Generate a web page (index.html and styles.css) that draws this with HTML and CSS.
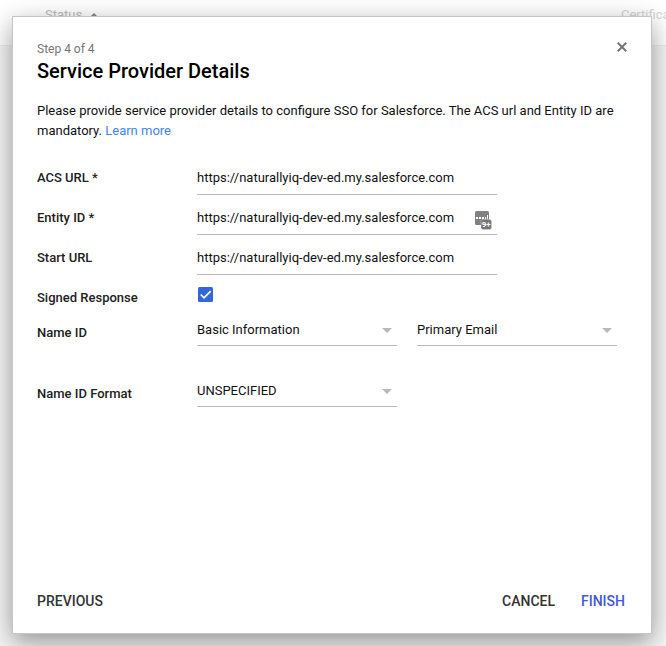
FILE: index.html
```html
<!DOCTYPE html>
<html lang="en">
<head>
<meta charset="utf-8">
<title>Service Provider Details</title>
<link rel="stylesheet" href="styles.css">
</head>
<body>
<div class="backdrop">
  <div class="columns">
    <span class="status">Status <svg class="sort" viewBox="0 0 6 4"><path d="M3 0l3 3v1H0V3z"/></svg></span>
    <span class="certificate">Certificate</span>
  </div>
</div>
<main class="dialog">
  <header class="head">
    <div>
      <div class="step">Step 4 of 4</div>
      <h1>Service Provider Details</h1>
    </div>
    <svg class="close" viewBox="0 0 10 10"><path d="M.7.7l8.6 8.6M9.3.7L.7 9.3"/></svg>
  </header>
  <p class="intro"><span>Please provide service provider details to configure SSO for Salesforce. The ACS url and Entity ID are</span><br><span>mandatory.</span> <a>Learn more</a></p>
  <section class="form">
    <div class="row"><label>ACS URL *</label><div class="field">https://naturallyiq-dev-ed.my.salesforce.com</div></div>
    <div class="row"><label>Entity ID *</label><div class="field">https://naturallyiq-dev-ed.my.salesforce.com
      <svg class="manager" viewBox="0 0 17 19"><rect width="14" height="14" rx="1.5"/><path class="dots" d="M1 6h2v2H1zM4 6h2v2H4zM7 6h2v2H7zM10 6h1v2h-1zM12 4h1v4h-1z"/><rect class="badge" x="6" y="8.5" width="10.5" height="10" rx="2"/><text x="6.7" y="16.3">9+</text></svg></div></div>
    <div class="row"><label>Start URL</label><div class="field">https://naturallyiq-dev-ed.my.salesforce.com</div></div>
    <div class="row check-row"><label>Signed Response</label><svg class="check" viewBox="0 0 15 15"><rect width="15" height="15" rx="1.5"/><path d="M2.7 7.5l3.3 3.3 6.7-6.7"/></svg></div>
    <div class="row select-row"><label>Name ID</label><div class="select">Basic Information<svg viewBox="0 0 10 5"><path d="M0 0h10L5 5z"/></svg></div><div class="select">Primary Email<svg viewBox="0 0 10 5"><path d="M0 0h10L5 5z"/></svg></div></div>
    <div class="row select-row format"><label>Name ID Format</label><div class="select">UNSPECIFIED<svg viewBox="0 0 10 5"><path d="M0 0h10L5 5z"/></svg></div></div>
  </section>
  <footer class="actions"><span class="previous">PREVIOUS</span><span>CANCEL</span><span class="finish">FINISH</span></footer>
</main>
</body>
</html>
```
FILE: styles.css
```css
* { box-sizing: border-box; }
body { margin: 0; height: 646px; overflow: hidden; position: relative; background: #f6f6f6; font: 13px/20px Roboto, sans-serif; color: #111; }
.backdrop { height: 46px; background: #fff; border-bottom: 1px solid #eee; overflow: hidden; }
.columns { display: flex; padding: 5px 0 0 45px; white-space: nowrap; color: #bdbdbd; }
.status { flex: 0 0 576px; }
.sort { width: 6px; height: 4px; margin: 0 0 2px 6px; fill: #888; }
.certificate { color: #d5d5d5; }
.dialog { position: absolute; left: 12px; top: 16px; width: 640px; height: 618px; padding: 23px 24px 0; background: #fff; border: 1px solid #c6c6c6; box-shadow: 0 8px 24px rgba(0,0,0,.4); display: flex; flex-direction: column; }
.head { display: flex; justify-content: space-between; }
.step { font-size: 12px; line-height: 18px; color: #757575; }
h1 { margin: 1px 0 0; font-size: 20px; line-height: 24px; font-weight: 500; color: #000; }
.close { width: 10px; height: 10px; margin: 2px 0 0; stroke: #757575; stroke-width: 2; }
.intro { margin: 18px 0 0; }
.intro a { color: #4285f4; }
.form { margin-top: 20px; }
.row { display: flex; height: 40px; }
label { width: 160px; padding-top: 7px; font-weight: 500; color: #212121; }
.field { width: 300px; height: 34px; padding-top: 7px; border-bottom: 1px solid #b8b8b8; position: relative; }
.manager { position: absolute; left: 278px; top: 10px; width: 17px; height: 19px; fill: #808080; }
.manager .dots { fill: #fff; }
.manager .badge { stroke: #ddd; stroke-width: .4; fill: #757575; }
.manager text { fill: #fff; font: bold 8px Roboto, sans-serif; }
.check-row { height: 35px; }
.check { width: 15px; height: 15px; margin: 6px 0 0 1px; fill: #3367d6; }
.check path { fill: none; stroke: #fff; stroke-width: 1.7; }
.select-row { height: 61px; gap: 20px; }
.select-row label { width: 140px; padding-top: 7px; }
.select { display: flex; justify-content: space-between; width: 200px; height: 30px; padding: 4px 5px 0 0; border-bottom: 1px solid #b8b8b8; }
.select svg { width: 10px; height: 5px; margin-top: 8px; fill: #b8b8b8; }
.actions { display: flex; gap: 26px; margin: auto 2px 22px 0; font-size: 14px; font-weight: 500; color: #333; }
.previous { margin-right: auto; }
.finish { color: #4258dc; }
```
